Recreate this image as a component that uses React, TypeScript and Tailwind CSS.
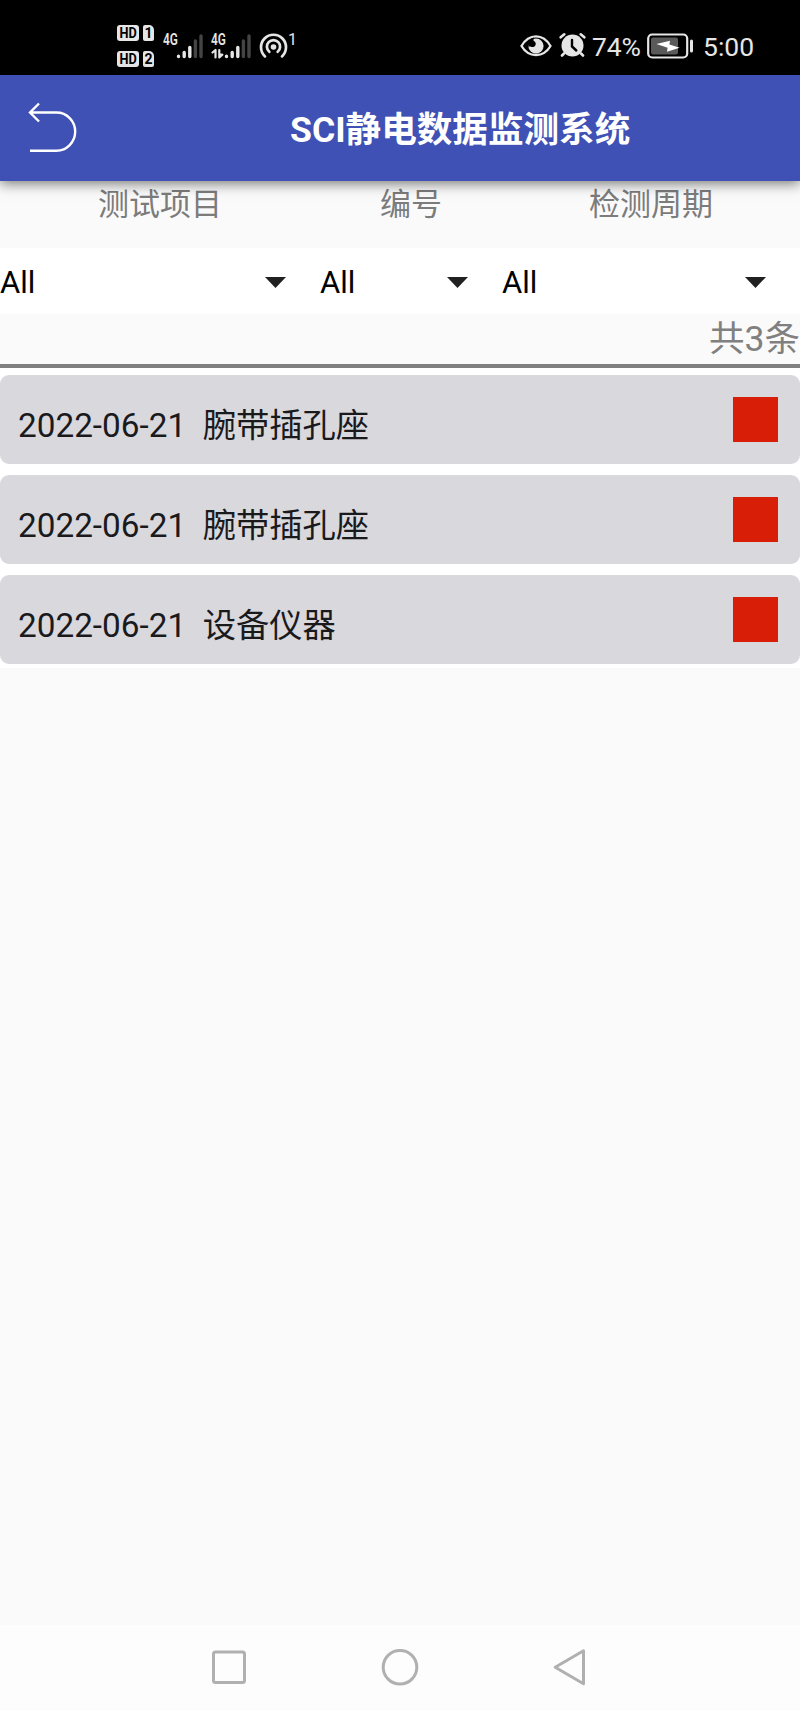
const RECORDS = [
  { id: 1, date: "2022-06-21", name: "腕带插孔座" },
  { id: 2, date: "2022-06-21", name: "腕带插孔座" },
  { id: 3, date: "2022-06-21", name: "设备仪器" },
];

const FILTERS = [
  { label: "测试项目", width: "w-[320px]" },
  { label: "编号", width: "w-[182px]" },
  { label: "检测周期", width: "w-[298px]" },
];

function SimBadge({ slot }: { slot: string }) {
  return (
    <div className="flex h-4 gap-1">
      <span className="flex h-4 w-[22px] items-center justify-center rounded-[3px] bg-[#e6e6e6] text-[15px] leading-none font-bold text-black">
        <span className="scale-x-[0.85]">HD</span>
      </span>
      <span className="flex h-4 w-[11px] items-center justify-center rounded-[2px] rounded-tr-[5px] bg-[#e6e6e6] text-[14px] leading-none font-bold text-black">
        {slot}
      </span>
    </div>
  );
}

function Signal({ data = false }: { data?: boolean }) {
  return (
    <div className="relative h-[26px] w-[40px]">
      <span className="absolute top-0 left-0 origin-left scale-x-[0.72] text-[16.5px] leading-[14px] font-semibold">4G</span>
      <svg className="absolute inset-0" width="40" height="26" viewBox="0 0 40 26" fill="none" strokeWidth="3.4" strokeLinecap="round">
        <path d="M15.5 23.2v.3M21.2 19.5v4M26.8 14.5v9" stroke="#e6e6e6" />
        <path d="M32.4 8v15.5M38 3v20.5" stroke="#444" />
        {data && (
          <path d="M1.5 19.5L4.5 17v7.5M8.3 17v7.5l3-2.8h-3" stroke="#e6e6e6" strokeWidth="2.2" strokeLinejoin="round" />
        )}
      </svg>
    </div>
  );
}

function StatusBar() {
  return (
    <div className="flex h-[75px] shrink-0 items-start justify-between bg-black pr-[45px] pl-[117px] text-[#e6e6e6]">
      <div className="flex">
        <div className="mt-[25px] flex flex-col gap-[10px]">
          <SimBadge slot="1" />
          <SimBadge slot="2" />
        </div>
        <div className="mt-[33px] ml-[9px] flex">
          <Signal />
          <div className="ml-[8px]">
            <Signal data />
          </div>
          <svg className="ml-[8px]" width="29" height="26" viewBox="0 0 29 26" fill="none" stroke="#e6e6e6" strokeWidth="2.7" strokeLinecap="round">
            <circle cx="14.5" cy="14" r="2.8" fill="#e6e6e6" stroke="none" />
            <path d="M10.3 18.8a6.6 6.6 0 1 1 8.4 0" />
            <path d="M6 23.4a12.5 12.5 0 1 1 17 0" />
          </svg>
          <span className="text-[16px] leading-[14px]">1</span>
        </div>
      </div>
      <div className="flex">
        <svg className="mt-[34px]" width="32" height="24" viewBox="0 0 32 24">
          <path d="M1.5 12C5 6 10 2.4 16 2.4S27 6 30.5 12C27 18 22 21 16 21S5 18 1.5 12z" fill="none" stroke="#e6e6e6" strokeWidth="2.3" />
          <circle cx="16" cy="12" r="7.6" fill="#e6e6e6" />
          <path d="M13.8 3.5c-.6 3-.2 4.6 1.2 5.8.8 2.6-1.3 4.4-3.9 3.5-1-.4-1.8-.6-2.6 0C7.5 8 10 4.5 13.8 3.5z" fill="#000" />
          <circle cx="12.8" cy="9.8" r="2.9" fill="#000" />
        </svg>
        <svg className="mt-[32px] ml-[7px]" width="27" height="26" viewBox="0 0 27 26" stroke="#e6e6e6" strokeWidth="2.6" strokeLinecap="round">
          <circle cx="13.5" cy="13.5" r="11" fill="#e6e6e6" stroke="none" />
          <path d="M1.7 5.3l3.6-3M25.3 5.3l-3.6-3M5 21.5l-2 2M22 21.5l2 2" />
          <path d="M13 8v6.5l4.3 4" stroke="#000" strokeWidth="2.4" fill="none" />
        </svg>
        <span className="mt-[33px] ml-[6px] w-[49px] text-[26.5px] leading-[28px] tracking-[-0.2px]">74%</span>
        <svg className="mt-[32px] ml-[6px]" width="48" height="28" viewBox="0 0 48 28">
          <rect x="1.2" y="2.5" width="39" height="23" rx="4" fill="none" stroke="#e6e6e6" strokeWidth="2.2" />
          <rect x="4" y="5.5" width="27" height="17" rx="2" fill="#5a5a5a" />
          <path d="M9.5 12L23 8.8l-.6 3.6 10.2 3.3L20 19.8l.6-4z" fill="#fff" />
          <rect x="43" y="7.5" width="3" height="13" rx="1.5" fill="#e6e6e6" />
        </svg>
        <span className="mt-[33px] ml-[8px] w-[52px] text-[26.5px] leading-[28px]">5:00</span>
      </div>
    </div>
  );
}

function Spinner({ width }: { width: string }) {
  return (
    <button className={`flex h-full items-center justify-between pr-[34px] ${width}`}>
      <span className="pt-[2px] text-[31px] leading-none text-black">All</span>
      <svg className="mt-[2px]" width="21" height="11" viewBox="0 0 21 11" fill="#212121">
        <path d="M0 0h21L10.5 11z" />
      </svg>
    </button>
  );
}

export default function App() {
  return (
    <div className="flex h-[1711px] w-[800px] flex-col overflow-hidden bg-[#fafafa] font-['Roboto','Noto_Sans_CJK_SC',sans-serif]">
      <StatusBar />

      {/* Toolbar */}
      <header className="z-10 flex h-[106px] shrink-0 items-center bg-[#3f51b5] shadow-[0_3px_12px_rgba(0,0,0,0.5)]">
        <svg className="ml-[27px]" width="50" height="52" viewBox="0 0 50 52" fill="none" stroke="#fff" strokeWidth="2.4">
          <path d="M12 1.5L3 10.5l9 9M3 10.5h26.5a18.6 19 0 0 1 0 38.2H3" />
        </svg>
        <h1 className="ml-[213px] pt-[3px] text-[35.6px] leading-[42px] font-bold whitespace-nowrap text-white">SCI静电数据监测系统</h1>
      </header>

      {/* Filters */}
      <div className="flex h-[67px] shrink-0">
        {FILTERS.map((f) => (
          <div key={f.label} className={`pt-[5px] text-center text-[31px] leading-[38px] text-[#7c7c7c] ${f.width}`}>
            {f.label}
          </div>
        ))}
      </div>
      <div className="flex h-[66px] shrink-0 bg-white">
        {FILTERS.map((f) => (
          <Spinner key={f.label} width={f.width} />
        ))}
      </div>
      <div className="h-[50px] shrink-0 text-right text-[35.5px] leading-[50px] text-[#808080]">共{RECORDS.length}条</div>

      {/* Records */}
      <div className="h-1 shrink-0 bg-[#808080]" />
      <ul className="flex shrink-0 flex-col gap-[11px] bg-white pt-[7px] pb-1">
        {RECORDS.map((r) => (
          <li key={r.id} className="flex h-[89px] items-start justify-between rounded-[9px] bg-[#d9d8dd] pt-[22px] pr-[22px] pl-[18px]">
            <span className="pt-[12px] text-[33.3px] leading-[33px] whitespace-pre text-[#1a1a1d]">{`${r.date}  ${r.name}`}</span>
            <span className="size-[45px] bg-[#d81e06]" />
          </li>
        ))}
      </ul>

      {/* System navigation */}
      <nav className="mt-auto flex h-[86px] shrink-0 bg-[#fdfdfd]">
        <svg className="mt-[23px] ml-[210px]" width="38" height="38" viewBox="0 0 38 38" fill="none" stroke="#b0b0b0" strokeWidth="3">
          <rect x="3.5" y="4" width="31" height="30.5" rx="2" />
        </svg>
        <svg className="mt-[23px] ml-[133px]" width="38" height="38" viewBox="0 0 38 38" fill="none" stroke="#b0b0b0" strokeWidth="3">
          <circle cx="19" cy="19.3" r="16.8" />
        </svg>
        <svg className="mt-[23px] ml-[133px]" width="38" height="38" viewBox="0 0 38 38" fill="none" stroke="#b0b0b0" strokeWidth="3" strokeLinejoin="round">
          <path d="M31.5 2.8v33L3.2 19.3z" />
        </svg>
      </nav>
    </div>
  );
}
